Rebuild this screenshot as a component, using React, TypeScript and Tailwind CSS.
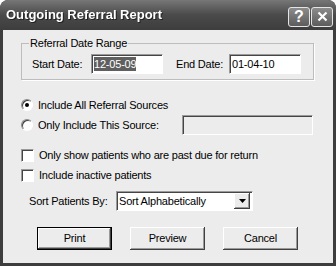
const sunken =
  "border border-t-[#9a9a9a] border-l-[#9a9a9a] border-b-[#ffffff] border-r-[#ffffff] shadow-[inset_1px_1px_0_#454545]";

const Radio = ({ checked }: { checked?: boolean }) => (
  <span className="relative w-[12px] h-[12px] rounded-full bg-white border border-t-[#8a8a8a] border-l-[#8a8a8a] border-b-[#ffffff] border-r-[#ffffff] shadow-[inset_1px_1px_0_#404040] flex items-center justify-center shrink-0">
    {checked && <span className="w-[4px] h-[4px] rounded-full bg-black" />}
  </span>
);

const Checkbox = () => (
  <span className={`w-[13px] h-[13px] bg-white shrink-0 ${sunken}`} />
);

const Button = ({ label, isDefault }: { label: string; isDefault?: boolean }) => (
  <button
    className={`w-[75px] h-[23px] bg-[#ececec] text-[11px] tracking-[-0.2px] text-black ${
      isDefault
        ? "border border-black shadow-[inset_-1px_-1px_0_#404040,inset_1px_1px_0_#ffffff,inset_-2px_-2px_0_#9a9a9a]"
        : "shadow-[inset_-1px_-1px_0_#404040,inset_1px_1px_0_#ffffff,inset_-2px_-2px_0_#9a9a9a]"
    }`}
  >
    {label}
  </button>
);

export default function App() {
  return (
    <div
      className="w-[336px] h-[266px] bg-[#3d3d3d] rounded-t-[8px] flex flex-col overflow-hidden"
      style={{ fontFamily: '"Liberation Sans", Arial, sans-serif' }}
    >
      {/* title bar */}
      <div className="h-[30px] shrink-0 flex items-center pl-[6px] pr-[3px] rounded-t-[8px] bg-gradient-to-b from-[#777777] via-[#4a4a4a] to-[#3d3d3d]">
        <span className="text-white font-bold text-[13px] drop-shadow-[1px_1px_0_#222]">
          Outgoing Referral Report
        </span>
        <div className="ml-auto flex gap-[1px] mt-[3px]">
          <div className="w-[22px] h-[20px] rounded-[3px] border border-[#e4e4e4] bg-gradient-to-b from-[#8c8c8c] to-[#5c5c5c] flex items-center justify-center text-white font-bold text-[16px] leading-none">
            ?
          </div>
          <div className="w-[22px] h-[20px] rounded-[3px] border border-[#e4e4e4] bg-gradient-to-b from-[#8c8c8c] to-[#5c5c5c] flex items-center justify-center">
            <svg width="11" height="11" viewBox="0 0 11 11">
              <path d="M1.5 1.5 L9.5 9.5 M9.5 1.5 L1.5 9.5" stroke="#fff" strokeWidth="2.2" />
            </svg>
          </div>
        </div>
      </div>

      {/* client area */}
      <div className="flex-1 mx-[3px] mb-[3px] bg-[#ececec] pl-[18px] flex flex-col text-[11px] tracking-[-0.2px] text-black">
        <div className="relative mt-[13px] w-[293px] h-[37px] border border-[#bdbdbd] shadow-[1px_1px_0_#ffffff] flex items-start pt-[10px] pl-[10px]">
          <span className="absolute -top-[7px] left-[7px] px-[1px] bg-[#ececec] leading-[13px]">
            Referral Date Range
          </span>
          <span className="w-[59px] h-[20px] flex items-center">Start Date:</span>
          <div className={`w-[72px] h-[20px] bg-white flex items-center pl-[2px] ${sunken}`}>
            <span className="bg-[#5f5f5f] text-white leading-[14px]">12-05-09</span>
          </div>
          <span className="ml-[13px] w-[53px] h-[20px] flex items-center">End Date:</span>
          <div className={`w-[72px] h-[20px] bg-white flex items-center pl-[2px] ${sunken}`}>
            01-04-10
          </div>
        </div>

        <div className="mt-[15px] h-[20px] flex items-center gap-[5px]">
          <Radio checked />
          <span>Include All Referral Sources</span>
        </div>
        <div className="h-[20px] flex items-center gap-[5px]">
          <Radio />
          <span>Only Include This Source:</span>
          <div className={`ml-auto mr-[20px] w-[131px] h-[20px] bg-[#ececec] ${sunken}`} />
        </div>

        <div className="mt-[10px] h-[20px] flex items-center gap-[5px]">
          <Checkbox />
          <span>Only show patients who are past due for return</span>
        </div>
        <div className="h-[20px] flex items-center gap-[5px]">
          <Checkbox />
          <span>Include inactive patients</span>
        </div>

        <div className="mt-[6px] h-[20px] flex items-center pl-[8px]">
          <span className="w-[87px]">Sort Patients By:</span>
          <div className={`w-[137px] h-[20px] bg-white flex items-center pl-[2px] pr-[2px] ${sunken}`}>
            <span className="flex-1">Sort Alphabetically</span>
            <div className="w-[16px] h-[16px] bg-[#ececec] shadow-[inset_-1px_-1px_0_#404040,inset_1px_1px_0_#ffffff,inset_-2px_-2px_0_#9a9a9a] flex items-center justify-center">
              <svg width="7" height="4" viewBox="0 0 7 4">
                <path d="M0 0 H7 L3.5 4 Z" fill="#000" />
              </svg>
            </div>
          </div>
        </div>

        <div className="mt-[16px] flex pl-[16px] gap-[18px]">
          <Button label="Print" isDefault />
          <Button label="Preview" />
          <Button label="Cancel" />
        </div>
      </div>
    </div>
  );
}
